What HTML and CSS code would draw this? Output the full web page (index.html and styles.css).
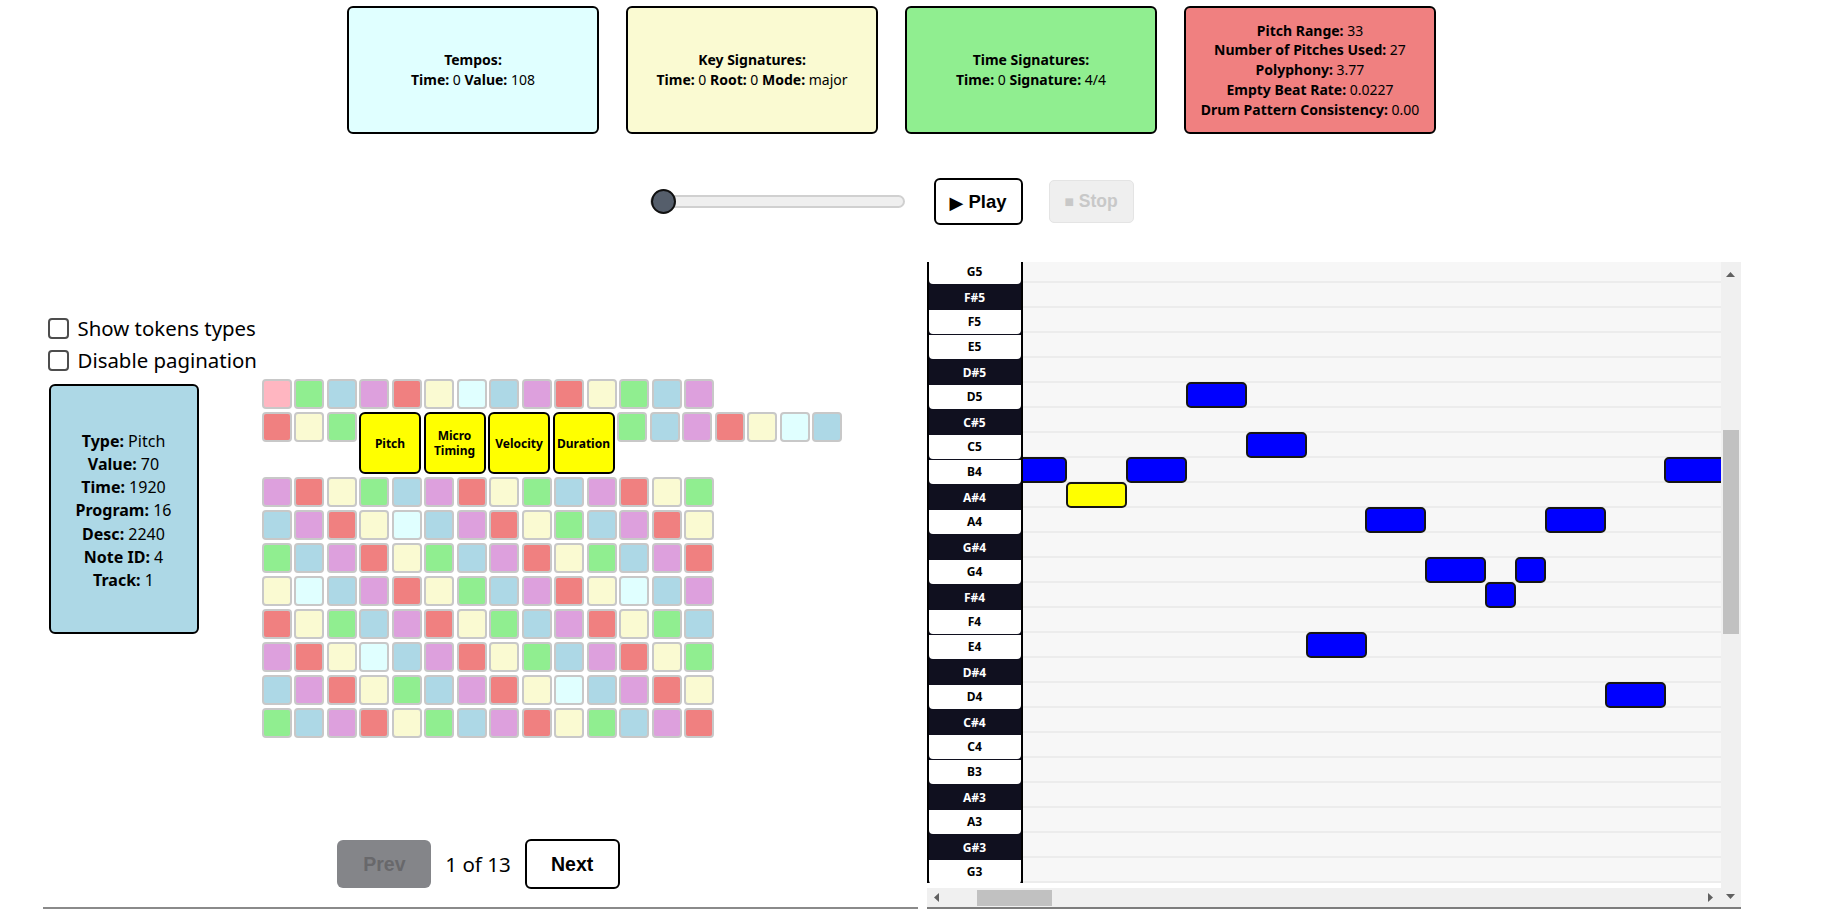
FILE: index.html
```html
<!DOCTYPE html>
<html lang="en">
<head>
<meta charset="utf-8">
<title>MIDI Tokens Viewer</title>
<link rel="stylesheet" href="styles.css">
</head>
<body>
<div class="page">
  <div class="cards">
    <div class="card tempo">
      <div><b>Tempos:</b></div>
      <div><b>Time:</b> 0 <b>Value:</b> 108</div>
    </div>
    <div class="card keysig">
      <div><b>Key Signatures:</b></div>
      <div><b>Time:</b> 0 <b>Root:</b> 0 <b>Mode:</b> major</div>
    </div>
    <div class="card timesig">
      <div><b>Time Signatures:</b></div>
      <div><b>Time:</b> 0 <b>Signature:</b> 4/4</div>
    </div>
    <div class="card stats">
      <div><b>Pitch Range:</b> 33</div>
      <div><b>Number of Pitches Used:</b> 27</div>
      <div><b>Polyphony:</b> 3.77</div>
      <div><b>Empty Beat Rate:</b> 0.0227</div>
      <div><b>Drum Pattern Consistency:</b> 0.00</div>
    </div>
  </div>

  <div class="controls">
    <input type="range" class="slider" min="0" max="100" value="0">
    <button class="play"><span class="tri">▶</span> Play</button>
    <button class="stop" disabled><span class="sq">■</span> Stop</button>
  </div>

  <div class="main">
    <section class="left">
      <label class="check"><input type="checkbox" class="cb"><span>Show tokens types</span></label>
      <label class="check"><input type="checkbox" class="cb"><span>Disable pagination</span></label>
      <div class="tokens">
        <div class="info">
          <div><b>Type:</b> Pitch</div>
          <div><b>Value:</b> 70</div>
          <div><b>Time:</b> 1920</div>
          <div><b>Program:</b> 16</div>
          <div><b>Desc:</b> 2240</div>
          <div><b>Note ID:</b> 4</div>
          <div><b>Track:</b> 1</div>
        </div>
        <div class="grid">
          <div class="row"><span class="c pk"></span><span class="c gr"></span><span class="c lb"></span><span class="c pl"></span><span class="c co"></span><span class="c ly"></span><span class="c cy"></span><span class="c lb"></span><span class="c pl"></span><span class="c co"></span><span class="c ly"></span><span class="c gr"></span><span class="c lb"></span><span class="c pl"></span></div>
          <div class="row"><span class="c co"></span><span class="c ly"></span><span class="c gr"></span><span class="y">Pitch</span><span class="y">Micro<br>Timing</span><span class="y">Velocity</span><span class="y">Duration</span><span class="c gr"></span><span class="c lb"></span><span class="c pl"></span><span class="c co"></span><span class="c ly"></span><span class="c cy"></span><span class="c lb"></span></div>
          <div class="row"><span class="c pl"></span><span class="c co"></span><span class="c ly"></span><span class="c gr"></span><span class="c lb"></span><span class="c pl"></span><span class="c co"></span><span class="c ly"></span><span class="c gr"></span><span class="c lb"></span><span class="c pl"></span><span class="c co"></span><span class="c ly"></span><span class="c gr"></span></div>
          <div class="row"><span class="c lb"></span><span class="c pl"></span><span class="c co"></span><span class="c ly"></span><span class="c cy"></span><span class="c lb"></span><span class="c pl"></span><span class="c co"></span><span class="c ly"></span><span class="c gr"></span><span class="c lb"></span><span class="c pl"></span><span class="c co"></span><span class="c ly"></span></div>
          <div class="row"><span class="c gr"></span><span class="c lb"></span><span class="c pl"></span><span class="c co"></span><span class="c ly"></span><span class="c gr"></span><span class="c lb"></span><span class="c pl"></span><span class="c co"></span><span class="c ly"></span><span class="c gr"></span><span class="c lb"></span><span class="c pl"></span><span class="c co"></span></div>
          <div class="row"><span class="c ly"></span><span class="c cy"></span><span class="c lb"></span><span class="c pl"></span><span class="c co"></span><span class="c ly"></span><span class="c gr"></span><span class="c lb"></span><span class="c pl"></span><span class="c co"></span><span class="c ly"></span><span class="c cy"></span><span class="c lb"></span><span class="c pl"></span></div>
          <div class="row"><span class="c co"></span><span class="c ly"></span><span class="c gr"></span><span class="c lb"></span><span class="c pl"></span><span class="c co"></span><span class="c ly"></span><span class="c gr"></span><span class="c lb"></span><span class="c pl"></span><span class="c co"></span><span class="c ly"></span><span class="c gr"></span><span class="c lb"></span></div>
          <div class="row"><span class="c pl"></span><span class="c co"></span><span class="c ly"></span><span class="c cy"></span><span class="c lb"></span><span class="c pl"></span><span class="c co"></span><span class="c ly"></span><span class="c gr"></span><span class="c lb"></span><span class="c pl"></span><span class="c co"></span><span class="c ly"></span><span class="c gr"></span></div>
          <div class="row"><span class="c lb"></span><span class="c pl"></span><span class="c co"></span><span class="c ly"></span><span class="c gr"></span><span class="c lb"></span><span class="c pl"></span><span class="c co"></span><span class="c ly"></span><span class="c cy"></span><span class="c lb"></span><span class="c pl"></span><span class="c co"></span><span class="c ly"></span></div>
          <div class="row"><span class="c gr"></span><span class="c lb"></span><span class="c pl"></span><span class="c co"></span><span class="c ly"></span><span class="c gr"></span><span class="c lb"></span><span class="c pl"></span><span class="c co"></span><span class="c ly"></span><span class="c gr"></span><span class="c lb"></span><span class="c pl"></span><span class="c co"></span></div>
        </div>
      </div>
      <div class="pager">
        <button class="prev" disabled>Prev</button>
        <span class="count">1 of 13</span>
        <button class="next">Next</button>
      </div>
    </section>

    <section class="piano">
      <div class="roll">
        <div class="viewport">
          <div class="keys">
            <div class="keylist">
              <div class="k w">G5</div>
              <div class="k">F#5</div>
              <div class="k w">F5</div>
              <div class="k w">E5</div>
              <div class="k">D#5</div>
              <div class="k w">D5</div>
              <div class="k">C#5</div>
              <div class="k w">C5</div>
              <div class="k w">B4</div>
              <div class="k">A#4</div>
              <div class="k w">A4</div>
              <div class="k">G#4</div>
              <div class="k w">G4</div>
              <div class="k">F#4</div>
              <div class="k w">F4</div>
              <div class="k w">E4</div>
              <div class="k">D#4</div>
              <div class="k w">D4</div>
              <div class="k">C#4</div>
              <div class="k w">C4</div>
              <div class="k w">B3</div>
              <div class="k">A#3</div>
              <div class="k w">A3</div>
              <div class="k">G#3</div>
              <div class="k w">G3</div>
            </div>
          </div>
          <div class="lanes">
            <div class="lanelist">
              <div class="lane"></div><div class="lane"></div><div class="lane"></div><div class="lane"></div><div class="lane"></div>
              <div class="lane"></div><div class="lane"></div><div class="lane"></div><div class="lane"></div><div class="lane"></div>
              <div class="lane"></div><div class="lane"></div><div class="lane"></div><div class="lane"></div><div class="lane"></div>
              <div class="lane"></div><div class="lane"></div><div class="lane"></div><div class="lane"></div><div class="lane"></div>
              <div class="lane"></div><div class="lane"></div><div class="lane"></div><div class="lane"></div><div class="lane"></div>
              <div class="lane"></div>
              <div class="note" style="left:-17px;top:199px"></div>
              <div class="note sel" style="left:43px;top:224px"></div>
              <div class="note" style="left:103px;top:199px"></div>
              <div class="note" style="left:163px;top:124px"></div>
              <div class="note" style="left:223px;top:174px"></div>
              <div class="note" style="left:283px;top:374px"></div>
              <div class="note" style="left:342px;top:249px"></div>
              <div class="note" style="left:402px;top:299px"></div>
              <div class="note short" style="left:462px;top:324px"></div>
              <div class="note short" style="left:492px;top:299px"></div>
              <div class="note" style="left:522px;top:249px"></div>
              <div class="note" style="left:582px;top:424px"></div>
              <div class="note" style="left:641px;top:199px"></div>
            </div>
          </div>
        </div>
        <div class="strip"></div>
        <div class="hscroll">
          <div class="harrow"><svg width="5" height="9" viewBox="0 0 5 9"><path d="M5 0 L0 4.5 L5 9 Z" fill="#606060"/></svg></div>
          <div class="hthumb"></div>
          <div class="harrow end"><svg width="5" height="9" viewBox="0 0 5 9"><path d="M0 0 L5 4.5 L0 9 Z" fill="#606060"/></svg></div>
        </div>
      </div>
      <div class="vscroll">
        <div class="varrow up"><svg width="9" height="5" viewBox="0 0 9 5"><path d="M0 5 L4.5 0 L9 5 Z" fill="#606060"/></svg></div>
        <div class="vthumb"></div>
        <div class="varrow down"><svg width="9" height="5" viewBox="0 0 9 5"><path d="M0 0 L4.5 5 L9 0 Z" fill="#606060"/></svg></div>
      </div>
    </section>
  </div>
</div>
</body>
</html>
```

FILE: styles.css
```css
body {
  margin: 0;
  font-family: "Noto Sans", "Open Sans", sans-serif;
  color: #000;
  background: #fff;
}

.page {
  width: 1783px;
  display: flex;
  flex-direction: column;
  align-items: center;
}

/* ---------- summary cards ---------- */
.cards {
  display: flex;
  gap: 27px;
  margin-top: 6px;
}

.card {
  width: 252px;
  height: 128px;
  box-sizing: border-box;
  border: 2px solid #000;
  border-radius: 6px;
  display: flex;
  flex-direction: column;
  justify-content: center;
  align-items: center;
  text-align: center;
  font-size: 14px;
  line-height: 19.7px;
}

.tempo { background: #e0ffff; }
.keysig { background: #fafad2; }
.timesig { background: #90ee90; }
.stats { background: #f08080; }

/* ---------- playback controls ---------- */
.controls {
  display: flex;
  align-items: center;
  margin-top: 44px;
  height: 47px;
}

.slider {
  -webkit-appearance: none;
  appearance: none;
  width: 255px;
  height: 13px;
  margin: 0 29px 0 0;
  box-sizing: border-box;
  background: #efefef;
  border: 2px solid #d0d0d0;
  border-radius: 7px;
  outline: none;
}

.slider::-webkit-slider-thumb {
  -webkit-appearance: none;
  appearance: none;
  width: 25px;
  height: 25px;
  box-sizing: border-box;
  border-radius: 50%;
  background: #555e6b;
  border: 2.5px solid #111;
  margin-left: -1px;
}

.play {
  width: 89px;
  height: 47px;
  box-sizing: border-box;
  border: 2px solid #000;
  border-radius: 6px;
  background: #fff;
  color: #000;
  font: bold 18.5px "Liberation Sans", Arial, sans-serif;
  padding: 0;
  margin-right: 26px;
}

.play .tri {
  font-family: "DejaVu Sans", sans-serif;
  font-size: 18px;
  vertical-align: -1px;
}

.stop {
  width: 85px;
  height: 43px;
  box-sizing: border-box;
  border: 1px solid #e4e4e4;
  border-radius: 5px;
  background: #efefef;
  color: #c8c8c8;
  font: bold 17.5px "Liberation Sans", Arial, sans-serif;
  padding: 0;
}

.stop .sq {
  font-family: "DejaVu Sans", sans-serif;
  font-size: 10px;
  vertical-align: 2px;
}

/* ---------- main area ---------- */
.main {
  display: flex;
  gap: 9px;
  margin-top: 37px;
  width: 1698px;
}

.left {
  width: 875px;
  height: 647px;
  box-sizing: border-box;
  border-bottom: 2px solid #8a8a8a;
  padding: 50px 0 0 5px;
  display: flex;
  flex-direction: column;
}

.check {
  display: flex;
  align-items: center;
  height: 32px;
  gap: 9px;
  font-size: 20.4px;
}

.cb {
  -webkit-appearance: none;
  appearance: none;
  width: 21px;
  height: 21px;
  margin: 0;
  flex: none;
  box-sizing: border-box;
  border: 2px solid #4d4d4d;
  border-radius: 4px;
  background: #fff;
}

.tokens {
  display: flex;
  align-items: flex-start;
  margin-top: 3px;
}

.info {
  width: 150px;
  height: 250px;
  box-sizing: border-box;
  margin: 5px 0 0 1px;
  padding-top: 4px;
  background: #add8e6;
  border: 2px solid #000;
  border-radius: 6px;
  display: flex;
  flex-direction: column;
  justify-content: center;
  align-items: center;
  font-size: 16px;
  line-height: 23.1px;
}

.grid {
  margin-left: 63px;
  display: flex;
  flex-direction: column;
  gap: 3px;
}

.row {
  display: flex;
  gap: 2.5px;
  align-items: flex-start;
}

.c {
  width: 30px;
  height: 30px;
  flex: none;
  box-sizing: border-box;
  border: 2px solid #c8c8c8;
  border-radius: 4px;
}

.pk { background: #ffb6c1; }
.gr { background: #90ee90; }
.lb { background: #add8e6; }
.pl { background: #dda0dd; }
.co { background: #f08080; }
.ly { background: #fafad2; }
.cy { background: #e0ffff; }

.y {
  width: 62px;
  height: 62px;
  flex: none;
  box-sizing: border-box;
  border: 2px solid #000;
  border-radius: 6px;
  background: #ffff00;
  display: flex;
  align-items: center;
  justify-content: center;
  text-align: center;
  font-weight: 700;
  font-size: 12px;
  line-height: 15px;
}

.pager {
  display: flex;
  justify-content: center;
  align-items: center;
  gap: 14px;
  margin: 101px 8px 0 0;
  height: 50px;
}

.prev {
  width: 94px;
  height: 48px;
  border: none;
  border-radius: 6px;
  background: #848589;
  color: #68686b;
  font: bold 19.5px "Liberation Sans", Arial, sans-serif;
  padding: 0;
}

.count {
  font-size: 20.5px;
}

.next {
  width: 95px;
  height: 50px;
  box-sizing: border-box;
  border: 2px solid #000;
  border-radius: 6px;
  background: #fff;
  color: #000;
  font: bold 19.5px "Liberation Sans", Arial, sans-serif;
  padding: 0;
}

/* ---------- piano roll ---------- */
.piano {
  width: 814px;
  height: 647px;
  box-sizing: border-box;
  border-bottom: 2px solid #7d7d7d;
  display: flex;
}

.roll {
  width: 794px;
  display: flex;
  flex-direction: column;
}

.viewport {
  height: 621px;
  display: flex;
  overflow: hidden;
}

.keys {
  width: 96px;
  flex: none;
  box-sizing: border-box;
  border-left: 2px solid #000;
  border-right: 2px solid #000;
  background: #10101f;
  overflow: hidden;
}

.keylist {
  margin-top: -2px;
}

.k {
  height: 25px;
  line-height: 25px;
  text-align: center;
  font-size: 12px;
  font-weight: 700;
  color: #fff;
}

.k.w {
  height: 24px;
  line-height: 24px;
  margin-bottom: 1px;
  background: #fff;
  color: #000;
  border-radius: 0 0 4px 4px;
}

.lanes {
  flex: 1;
  overflow: hidden;
  background: #f7f7f7;
}

.lanelist {
  position: relative;
  margin-top: -4px;
}

.lane {
  height: 25px;
  box-sizing: border-box;
  border-bottom: 2px solid #ececec;
}

.note {
  position: absolute;
  width: 61px;
  height: 26px;
  box-sizing: border-box;
  border: 2px solid #151515;
  border-radius: 5px;
  background: #0000ff;
}

.note.sel { background: #ffff00; }
.note.short { width: 31px; }

.strip {
  height: 5px;
  background: #fff;
}

.hscroll {
  height: 19px;
  background: #f0f0f0;
  display: flex;
  align-items: center;
}

.harrow {
  width: 19px;
  height: 19px;
  flex: none;
  display: flex;
  align-items: center;
  justify-content: center;
}

.harrow.end {
  width: 20px;
  margin-left: auto;
}

.hthumb {
  width: 75px;
  height: 16px;
  margin-left: 31px;
  background: #c1c1c1;
}

.vscroll {
  width: 20px;
  background: #f0f0f0;
  display: flex;
  flex-direction: column;
  align-items: center;
}

.varrow {
  width: 20px;
  display: flex;
  align-items: center;
  justify-content: center;
}

.varrow.up { height: 24px; }

.varrow.down {
  height: 21px;
  margin-top: auto;
}

.vthumb {
  width: 16px;
  height: 204px;
  margin-top: 144px;
  background: #c1c1c1;
}
```
